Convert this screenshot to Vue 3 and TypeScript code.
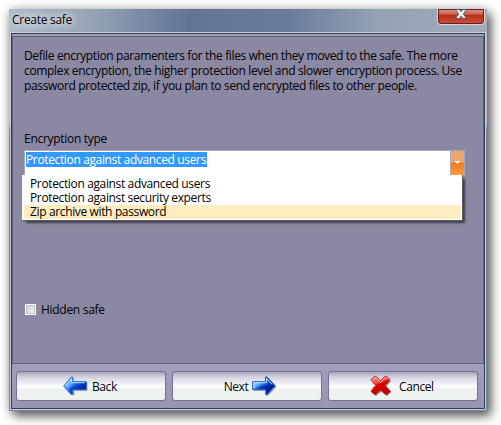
<script setup lang="ts">
import { ref } from 'vue'

const lines = [
  { id: 'a', text: 'Defile encryption paramenters for the files when they moved to the safe. The more' },
  { id: 'b', text: 'complex encryption, the higher protection level and slower encryption process. Use' },
  { id: 'c', text: 'password protected zip, if you plan to send encrypted files to other people.' },
]
const options = [
  'Protection against advanced users',
  'Protection against security experts',
  'Zip archive with password',
]
const selected = ref(0)
const highlighted = ref(2)
const hidden = ref(false)
</script>

<template>
  <div class="desktop">
    <div class="window">
      <header class="titlebar">
        <span class="title">Create safe</span>
        <button class="close" aria-label="Close">
          <svg width="14" height="12" viewBox="0 0 14 12">
            <path d="M1.5 .5H5.2L7 2.7L8.8 .5H12.5L9.4 5L12.5 9.5H8.8L7 7.3L5.2 9.5H1.5L4.6 5Z" fill="#f6f6f6" stroke="#53576b" stroke-width="1" />
          </svg>
        </button>
      </header>
      <div class="client">
        <main class="body">
          <div class="intro">
            <div v-for="l in lines" :key="l.id" class="line" :class="l.id">{{ l.text }}</div>
          </div>
          <div class="label">Encryption type</div>
          <div class="combo">
            <div class="value"><span class="selection">{{ options[selected] }}</span></div>
            <div class="drop">
              <svg width="5" height="3" viewBox="0 0 5 3" shape-rendering="crispEdges"><path d="M0 0H5V1H4V2H3V3H2V2H1V1H0Z" fill="#fff" /></svg>
            </div>
            <ul class="list">
              <li v-for="(o, i) in options" :key="o" :class="{ hot: i === highlighted }" @mouseenter="highlighted = i" @click="selected = i">{{ o }}</li>
            </ul>
          </div>
          <div class="check" @click="hidden = !hidden">
            <span class="box"></span><span class="check-text">Hidden safe</span>
          </div>
        </main>
        <footer class="footer">
          <button class="btn back">
            <svg width="25" height="21" viewBox="0 0 25 21">
              <defs>
                <linearGradient id="backFill" x1="0" y1="0" x2="1" y2="0.6">
                  <stop offset="0" stop-color="#a5ddff" /><stop offset=".4" stop-color="#58aaff" /><stop offset=".58" stop-color="#1457df" /><stop offset="1" stop-color="#0018a0" />
                </linearGradient>
              </defs>
              <path d="M2 11L11 2V6.5H24.5V15H11.5V20Z" fill="#777" opacity=".55" />
              <path d="M.7 10L8.2 1.2H9.8V5.7H23.3V13.7H9.8V18.6H8.2Z" fill="url(#backFill)" stroke="#1c5ed0" />
              <path d="M2.3 9.7L8.6 2.6V6.7H22" fill="none" stroke="#bce9ff" />
              <path d="M9 10.5Q16 10.5 22.5 6.8V13H9V17L5 12.5Z" fill="#002bbb" opacity=".38" />
            </svg>
            <span>Back</span>
          </button>
          <button class="btn next">
            <span>Next</span>
            <svg width="25" height="21" viewBox="0 0 25 21">
              <defs>
                <linearGradient id="nextFill" x1="0" y1="0" x2="1" y2=".6">
                  <stop offset="0" stop-color="#a5ddff" /><stop offset=".38" stop-color="#56a9fb" /><stop offset=".57" stop-color="#1457df" /><stop offset="1" stop-color="#000b80" />
                </linearGradient>
              </defs>
              <path d="M2 7H14V2L24.8 11L15 20.5V15H2Z" fill="#777" opacity=".55" />
              <path d="M.6 5.7H13.5V.9H15L23.2 9.8L15 18.7H13.8V13.7H.6Z" fill="url(#nextFill)" stroke="#1c58c8" />
              <path d="M1.8 12V6.7H14.5V2.5L20 8.3" fill="none" stroke="#bce9ff" />
              <path d="M2 12.8Q8 8.6 22 9.7L14.5 17V12.8Z" fill="#0010a0" opacity=".5" />
            </svg>
          </button>
          <button class="btn cancel">
            <svg width="22" height="22" viewBox="0 0 22 22">
              <defs>
                <linearGradient id="crossFill" x1="0" y1="0" x2=".4" y2="1">
                  <stop offset="0" stop-color="#ff9c95" /><stop offset=".42" stop-color="#f04c4c" /><stop offset=".52" stop-color="#dc0505" /><stop offset="1" stop-color="#c00000" />
                </linearGradient>
              </defs>
              <path d="M2 6L6 2L11.5 7L17 2L21 6L16.5 11.5L21.5 17L17 21L11.5 16.5L6 21L2 17L7 11.5Z" fill="#666" opacity=".6" />
              <path d="M1 4.5L5 1Q8 2.5 10.5 6Q13 2.5 16 1L20 4.5Q18.5 8 15 10.5Q18 13.5 20.5 16.5L16.5 20Q13 18 10.5 15Q8 18 5 20L1 16.5Q2.5 13 6 10.5Q2.5 8 1 4.5Z" fill="url(#crossFill)" stroke="#b83030" />
              <path d="M2.3 4.7L5 2.3Q8 4.3 10.5 7.8Q13 4 16 2.3L18.5 4.5" fill="none" stroke="#ffb4ad" />
            </svg>
            <span>Cancel</span>
          </button>
        </footer>
      </div>
    </div>
  </div>
</template>

<style>
body { background: #fff; overflow: hidden; }
</style>

<style scoped>
* { box-sizing: border-box; }
.desktop {
  width: 501px; height: 425px; padding: 9px; overflow: hidden; background: #fff;
  font: 12px/15px "Open Sans", "Noto Sans", sans-serif; color: #000; letter-spacing: -.29px; white-space: nowrap;
}
.window {
  width: 478px; height: 402px; padding: 0 2px 2px;
  background: linear-gradient(90deg, #aebac8 0, #98a5b7 80px, #627495 180px, #6b7c9b 280px, #93a1b4 365px, #a0adbd 100%) 0 0 / 100% 24px no-repeat, linear-gradient(#b5c0cd 0 114px, #7388a8 122px);
  box-shadow: 4px 5px 10px rgba(0,0,0,.62), 0 0 10px rgba(0,0,0,.22);
}
.titlebar { display: flex; justify-content: space-between; height: 24px; }
.title { padding: 3px 0 0 1px; line-height: 15px; text-shadow: 0 0 7px #fff, 0 0 10px #fff; }
.close {
  width: 48px; height: 16px; padding: 0; display: flex; justify-content: center; align-items: flex-start;
  border: 1px solid #e1cfd2; border-top: 0; border-radius: 0 0 4px 4px;
  background: linear-gradient(#d69186, #ca6b5b 5px, #b92c15 6px, #cc5237 15px); box-shadow: inset 0 0 0 1px #611f28;
}
.client {
  width: 474px; height: 376px; display: flex; flex-direction: column;
  border: 1px solid #383b55; outline: 1px solid #c2cedc; background: #a19cba; padding: 2px 0 0;
}
.body {
  height: 328px; padding: 10px 11px 0; display: flex; flex-direction: column;
  border: 1px solid #605d77; background: #8b88a3;
}
.intro { height: 84px; padding-top: 1px; }
.line { height: 15px; }
.a { letter-spacing: -.36px; }
.b { letter-spacing: -.34px; }
.c { letter-spacing: -.34px; }
.label { height: 19px; line-height: 15px; }
.combo { position: relative; display: flex; width: 441px; height: 26px; border: 1px solid #aaa7c3; background: #fff; letter-spacing: -.36px; }
.value { flex: 1; padding: 1px; }
.selection { display: block; width: 181px; height: 15px; line-height: 15px; background: #3399ff; color: #fff; }
.drop { width: 14px; border: solid #aaa7c3; border-width: 0 0 0 1px; background: linear-gradient(#eda56d 0 11px, #f47b1c 12px, #ff993f); display: flex; align-items: center; justify-content: center; padding-bottom: 1px; }
.list {
  position: absolute; left: -3px; top: 24px; width: 441px; height: 46px; margin: 0; padding: 2px 1px 1px 2px; list-style: none;
  background: #fff; border: solid #5a5d5e; border-width: 0 1px 1px 0; box-shadow: 3px 3px 2px -1px rgba(40,44,50,.8);
}
.list li { height: 14px; line-height: 14px; padding-left: 6px; }
.list .hot { background: #ffecc0; }
.check { display: flex; align-items: center; height: 15px; margin: 126px 0 0 1px; }
.box { width: 11px; height: 11px; border: 1px solid #fff; background: linear-gradient(135deg, #c7c8d0, #fafafa); box-shadow: inset 0 0 0 1px #bfc0c6; margin-right: 5px; }
.footer { flex: 1; display: flex; gap: 6px; padding: 7px 4px; background: linear-gradient(#a29dbb, #9994b2); }
.btn {
  width: 150px; height: 30px; padding: 0; display: flex; align-items: center; border: 1px solid #77728f; border-radius: 3px;
  background: linear-gradient(#a7a3bd 0, #d4d2df 5px, #fff 15px, #eef1f0 17px, #edf1ef 100%); font: inherit; letter-spacing: -.4px; color: #000;
}
.back { padding-left: 46px; gap: 4px; }
.next { padding-left: 50px; gap: 3px; }
.next span { width: 26px; }
.cancel { padding-left: 41px; gap: 7px; }
</style>
